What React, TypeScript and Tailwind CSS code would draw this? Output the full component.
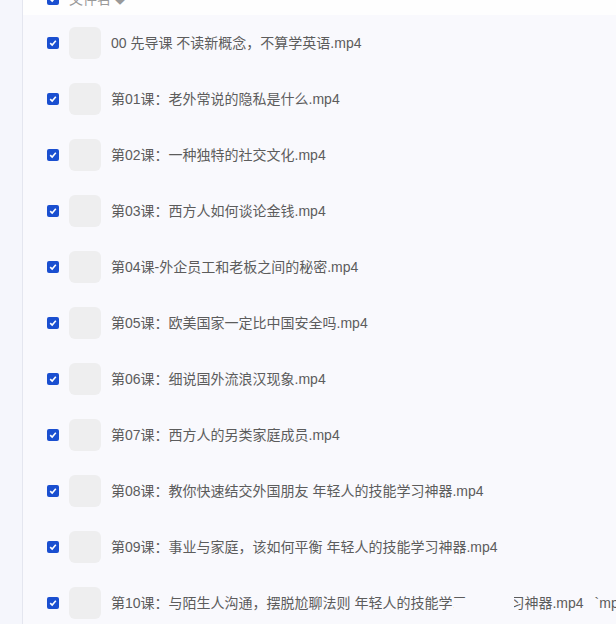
import React from "react";

const rows = [
  "00 先导课 不读新概念，不算学英语.mp4",
  "第01课：老外常说的隐私是什么.mp4",
  "第02课：一种独特的社交文化.mp4",
  "第03课：西方人如何谈论金钱.mp4",
  "第04课-外企员工和老板之间的秘密.mp4",
  "第05课：欧美国家一定比中国安全吗.mp4",
  "第06课：细说国外流浪汉现象.mp4",
  "第07课：西方人的另类家庭成员.mp4",
  "第08课：教你快速结交外国朋友 年轻人的技能学习神器.mp4",
  "第09课：事业与家庭，该如何平衡 年轻人的技能学习神器.mp4",
];

function Check() {
  return (
    <span className="flex h-3 w-3 shrink-0 items-center justify-center rounded-[2px] bg-[#1a4fd0]">
      <svg width="8" height="8" viewBox="0 0 8 8" fill="none">
        <path d="M1.2 4.1 3.2 6 6.8 1.8" stroke="#fff" strokeWidth="1.6" />
      </svg>
    </span>
  );
}

function Row({ children }: { children: React.ReactNode }) {
  return (
    <div className="flex h-14 items-center pl-6">
      <Check />
      <div className="ml-[10px] h-8 w-8 shrink-0 rounded-md bg-[#eeeeef]" />
      <div className="ml-[10px] whitespace-nowrap">{children}</div>
    </div>
  );
}

export default function App() {
  return (
    <div className="flex h-[624px] w-[616px] overflow-hidden bg-[#f9f9fd] font-['Liberation_Sans','Noto_Sans_CJK_SC',sans-serif] text-sm text-[#5c5c5c]">
      <div className="w-[22px] shrink-0 border-r border-[#e4e6ef] bg-[#f5f6fc] box-content" />
      <div className="relative min-w-0 flex-1 overflow-hidden">
        <div className="h-[15px] overflow-hidden bg-[#fefefe] pl-6">
          <div className="-mt-[7px] flex h-3 items-center gap-[10px]">
            <Check />
            <span className="whitespace-nowrap text-[#999]">
              文件名 <span className="text-[10px]">◆</span>
            </span>
          </div>
        </div>
        {rows.map((name) => (
          <Row key={name}>{name}</Row>
        ))}
        <Row>
          第10课：与陌生人沟通，摆脱尬聊法则 年轻人的技能学习
          <span className="ml-[44px]">习神器.mp4</span>
          <span className="ml-[11px]">`mp</span>
        </Row>
        <div className="absolute left-[431px] top-[598px] h-[14px] w-[22px] bg-[#f9f9fd]" />
        <div className="absolute left-[486px] top-[594px] h-[18px] w-[5px] bg-[#f9f9fd]" />
      </div>
    </div>
  );
}
